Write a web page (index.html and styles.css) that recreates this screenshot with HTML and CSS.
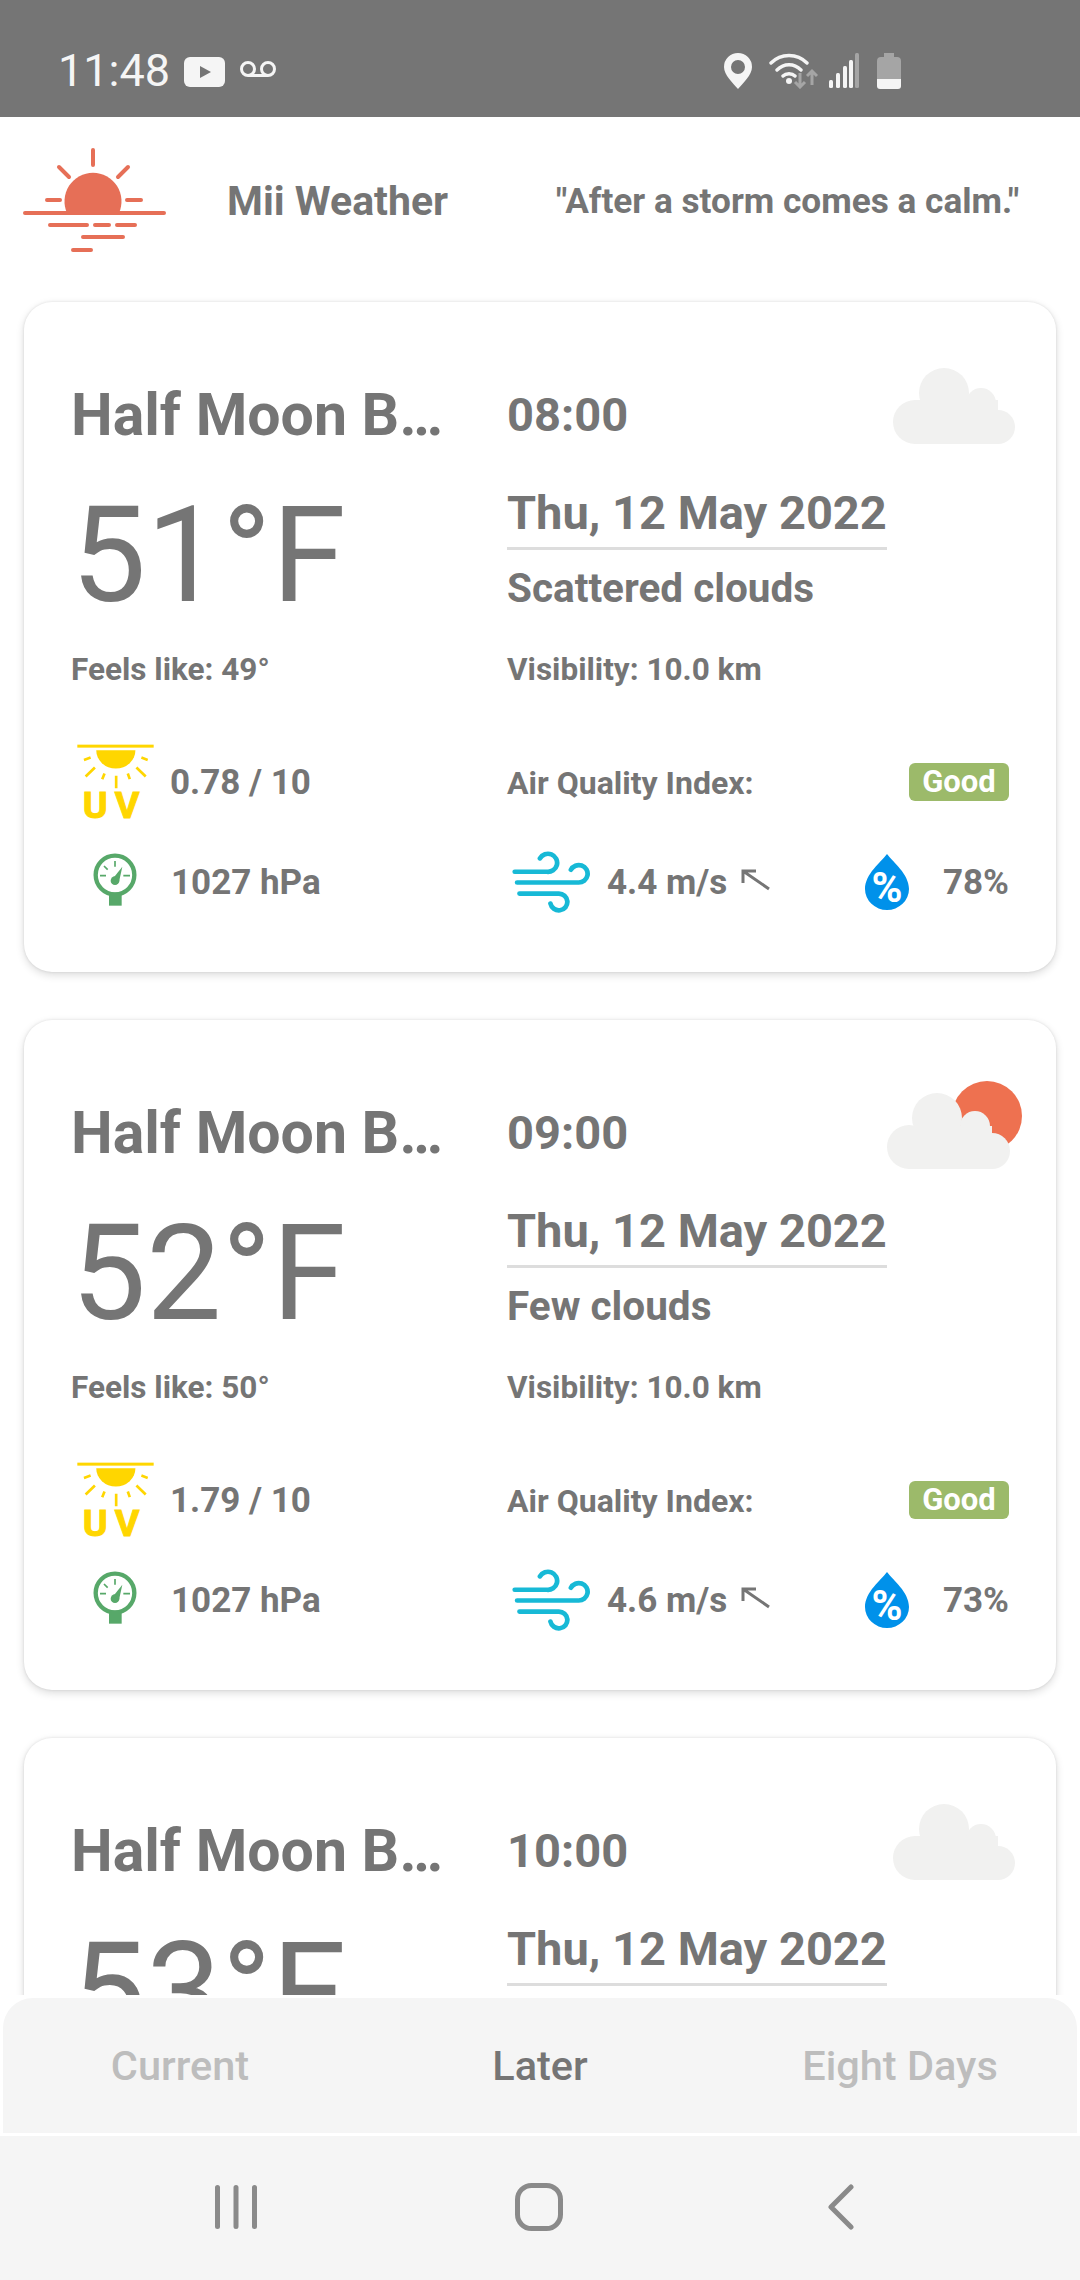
FILE: index.html
```html
<!DOCTYPE html>
<html lang="en">
<head>
<meta charset="utf-8">
<title>Mii Weather</title>
<link rel="stylesheet" href="styles.css">
</head>
<body>
<svg class="sprites" aria-hidden="true">
  <symbol id="cloud-a" viewBox="885 360 140 95">
    <g fill="#f1f1f0">
      <circle cx="915" cy="422" r="22"/><circle cx="944" cy="393" r="25"/><circle cx="981" cy="403" r="15"/><circle cx="998" cy="427" r="17"/>
      <rect x="915" y="400" width="83" height="44"/>
    </g>
  </symbol>
  <symbol id="cloud-b" viewBox="885 1077 140 95">
    <circle cx="987" cy="1115" r="35" fill="#ee7150"/>
    <g fill="#f1f1f0">
      <circle cx="909" cy="1146" r="22"/><circle cx="937" cy="1117" r="25"/><circle cx="975" cy="1125" r="15"/><circle cx="992" cy="1150" r="18"/>
      <rect x="909" y="1125" width="83" height="43"/>
    </g>
  </symbol>
  <symbol id="sunray" viewBox="100 90 250 250">
    <rect x="110" y="101" width="230" height="9" fill="#ffd600"/>
    <path d="M167 118h118a59 55 0 0 1-118 0z" fill="#ffd600"/>
    <g stroke="#ffd600" stroke-width="8" fill="none">
      <path d="M130 147l20-7M303 140l19 7M135 197l28-27M288 170l28 27M185 205l7-17M262 188l6 17M227 195v37"/>
    </g>
  </symbol>
  <symbol id="gauge" viewBox="150 420 150 180">
    <circle cx="225" cy="495" r="58" fill="none" stroke="#57a869" stroke-width="13"/>
    <rect x="207" y="548" width="38" height="39" fill="#57a869"/>
    <path d="M225 453v17M192 468l11 11M180 497h18M250 497h20" stroke="#57a869" stroke-width="5" fill="none"/>
    <circle cx="225" cy="512" r="13" fill="#57a869"/>
    <path d="M217 508l30-38-10 46z" fill="#57a869"/>
  </symbol>
  <symbol id="wind" viewBox="60 330 235 185" preserveAspectRatio="none">
    <path d="M71 392H165a27 27 0 1 0-20-40M78 424H258a26 26 0 1 0-22-38M85 457H200a25 25 0 1 1-24 30" fill="none" stroke="#17b9d6" stroke-width="14" stroke-linecap="round"/>
  </symbol>
  <symbol id="arrow" viewBox="0 0 30 22" preserveAspectRatio="none">
    <path d="M28 20L2 2M2 14V2H15" fill="none" stroke="#757575" stroke-width="3"/>
  </symbol>
  <symbol id="drop-shape" viewBox="0 0 44 56">
    <path d="M22 0C28 8 44 20 44 35A22 21 0 0 1 0 35C0 20 16 8 22 0z" fill="#0091ea"/>
  </symbol>
</svg>

<header class="status-bar">
  <div class="status-left">
    <span class="clock">11:48</span>
    <svg class="ic-yt" width="41" height="30" viewBox="0 0 41 30"><rect width="41" height="30" rx="6" fill="#f5f5f5"/><path d="M16 9l11 6-11 6z" fill="#757575"/></svg>
    <svg class="ic-vm" width="38" height="18" viewBox="0 0 38 18"><circle cx="9" cy="8" r="6.500" fill="none" stroke="#f5f5f5" stroke-width="3"/><circle cx="29" cy="8" r="6.500" fill="none" stroke="#f5f5f5" stroke-width="3"/><path d="M9 14.500h20" stroke="#f5f5f5" stroke-width="3"/></svg>
  </div>
  <div class="status-right">
    <svg width="28" height="36" viewBox="0 0 28 36"><path fill-rule="evenodd" d="M14 0a14 14 0 0 1 14 14c0 8-9 16-14 22C9 30 0 22 0 14A14 14 0 0 1 14 0zm0 7a7 7 0 1 0 0 14 7 7 0 0 0 0-14z" fill="#f5f5f5"/></svg>
    <svg class="ic-wifi" width="50" height="36" viewBox="0 0 50 36"><g fill="none" stroke="#f5f5f5" stroke-width="3.400" stroke-linecap="round"><path d="M2 10C12 0 28 0 38 10M8 17C15 10 25 10 32 17M14 23C17 20 23 20 26 23"/></g><circle cx="20" cy="28" r="3" fill="#f5f5f5"/><path d="M31 20v14M26 29l5 5 5-5M43 32V18M38 23l5-5 5 5" fill="none" stroke="#a5a5a5" stroke-width="3"/></svg>
    <svg class="ic-signal" width="30" height="35" viewBox="0 0 30 35"><g fill="#f5f5f5"><rect x="0" y="27" width="4" height="8" rx="1.500"/><rect x="7" y="20" width="4" height="15" rx="1.500"/><rect x="14" y="13" width="4" height="22" rx="1.500"/><rect x="20" y="7" width="4" height="28" rx="1.500"/></g><rect x="26" y="0" width="4" height="35" rx="1.500" fill="#a5a5a5"/></svg>
    <svg class="ic-battery" width="24" height="36" viewBox="0 0 24 36"><path d="M7 0h10v4h3a4 4 0 0 1 4 4v18H0V8a4 4 0 0 1 4-4h3z" fill="#a5a5a5"/><path d="M0 26h24v7a3 3 0 0 1-3 3H3a3 3 0 0 1-3-3z" fill="#f5f5f5"/></svg>
  </div>
</header>

<section class="app-bar">
  <svg class="logo" width="170" height="130" viewBox="10 130 170 130">
    <path d="M67 212A28.500 28.500 0 1 1 119 212z" fill="#e66f57"/>
    <g fill="none" stroke="#e66f57" stroke-linecap="round" stroke-width="4">
      <path d="M93 149v15M59 166l10 10M128 166l-10 10M47 199h13M127 199h14M25 212h139M50 224h37M95 224h14M117 224h18M83 236h40M73 249h18"/>
    </g>
  </svg>
  <h1 class="app-title">Mii Weather</h1>
  <p class="quote">"After a storm comes a calm."</p>
</section>

<main class="feed">
  <article class="card">
    <div class="name">Half Moon B…</div>
    <div class="time-row"><span class="time">08:00</span><svg class="sky"><use href="#cloud-a"/></svg></div>
    <div class="temp">51°F</div>
    <div class="date-block"><div class="date">Thu, 12 May 2022</div><div class="desc">Scattered clouds</div></div>
    <div class="small">Feels like: 49°</div>
    <div class="small">Visibility: 10.0 km</div>
    <div class="row-a stat">
      <svg class="ic-uv" viewBox="100 90 250 250"><use href="#sunray" x="100" y="90" width="250" height="250"/><text x="126 223" y="321" class="uv-text">UV</text></svg>
      <span>0.78 / 10</span>
    </div>
    <div class="row-a aqi"><span class="small">Air Quality Index:</span><span class="badge">Good</span></div>
    <div class="row-b stat"><svg class="ic-gauge"><use href="#gauge"/></svg><span>1027 hPa</span></div>
    <div class="row-b wind-row">
      <svg class="ic-wind"><use href="#wind"/></svg><span class="wind-val">4.4 m/s</span><svg class="ic-arrow"><use href="#arrow"/></svg>
      <svg class="ic-drop" viewBox="0 0 44 56"><use href="#drop-shape" width="44" height="56"/><text x="22" y="48" class="drop-text" text-anchor="middle">%</text></svg>
      <span class="humid">78%</span>
    </div>
  </article>

  <article class="card">
    <div class="name">Half Moon B…</div>
    <div class="time-row"><span class="time">09:00</span><svg class="sky"><use href="#cloud-b"/></svg></div>
    <div class="temp">52°F</div>
    <div class="date-block"><div class="date">Thu, 12 May 2022</div><div class="desc">Few clouds</div></div>
    <div class="small">Feels like: 50°</div>
    <div class="small">Visibility: 10.0 km</div>
    <div class="row-a stat">
      <svg class="ic-uv" viewBox="100 90 250 250"><use href="#sunray" x="100" y="90" width="250" height="250"/><text x="126 223" y="321" class="uv-text">UV</text></svg>
      <span>1.79 / 10</span>
    </div>
    <div class="row-a aqi"><span class="small">Air Quality Index:</span><span class="badge">Good</span></div>
    <div class="row-b stat"><svg class="ic-gauge"><use href="#gauge"/></svg><span>1027 hPa</span></div>
    <div class="row-b wind-row">
      <svg class="ic-wind"><use href="#wind"/></svg><span class="wind-val">4.6 m/s</span><svg class="ic-arrow"><use href="#arrow"/></svg>
      <svg class="ic-drop" viewBox="0 0 44 56"><use href="#drop-shape" width="44" height="56"/><text x="22" y="48" class="drop-text" text-anchor="middle">%</text></svg>
      <span class="humid">73%</span>
    </div>
  </article>

  <article class="card">
    <div class="name">Half Moon B…</div>
    <div class="time-row"><span class="time">10:00</span><svg class="sky"><use href="#cloud-a"/></svg></div>
    <div class="temp">53°F</div>
    <div class="date-block"><div class="date">Thu, 12 May 2022</div></div>
  </article>
</main>

<nav class="tabs">
  <span class="tab">Current</span>
  <span class="tab tab-active">Later</span>
  <span class="tab">Eight Days</span>
</nav>

<footer class="sys-nav">
  <svg width="42" height="44" viewBox="0 0 42 44"><path d="M2.500 2.500v39M21 2.500v39M39.500 2.500v39" stroke="#8a8a8a" stroke-width="5" stroke-linecap="round" fill="none"/></svg>
  <svg class="nav-home" width="48" height="48" viewBox="0 0 48 48"><rect x="2.500" y="2.500" width="43" height="43" rx="14" fill="none" stroke="#8a8a8a" stroke-width="5"/></svg>
  <svg width="26" height="46" viewBox="0 0 26 46"><path d="M23 3L3 23l20 20" fill="none" stroke="#8a8a8a" stroke-width="5" stroke-linecap="round" stroke-linejoin="round"/></svg>
</footer>
</body>
</html>
```
FILE: styles.css
```css
* { box-sizing: border-box; }
html, body { margin: 0; padding: 0; }
body {
  width: 1080px;
  height: 2280px;
  display: flex;
  flex-direction: column;
  overflow: hidden;
  background: #fff;
  color: #757575;
  font-family: Roboto, "Noto Sans", sans-serif;
}
.sprites { position: absolute; width: 0; height: 0; }
.uv-text { font-family: Roboto, sans-serif; font-weight: 700; font-size: 114px; fill: #ffd600; stroke: #ffd600; stroke-width: 3px; }
.drop-text { font-family: Roboto, sans-serif; font-weight: 700; font-size: 42px; fill: #fff; }

.status-bar {
  height: 117px;
  flex: none;
  background: #757575;
  display: flex;
  align-items: center;
  justify-content: space-between;
  padding: 24px 179px 0 58px;
}
.status-left, .status-right { display: flex; align-items: center; }
.clock { font-size: 45px; color: #f5f5f5; line-height: 48px; margin-right: 14px; }
.ic-yt { margin-top: 2px; }
.ic-vm { margin-left: 14px; margin-top: -1px; }
.ic-wifi { margin-left: 17px; margin-right: 10px; }
.ic-signal { margin-right: 18px; }

.app-bar {
  height: 179px;
  flex: none;
  display: flex;
  align-items: center;
  padding-left: 10px;
}
.logo { flex: none; margin-top: -22px; }
.app-title { margin: -11px 0 0 47px; font-size: 41px; font-weight: 700; width: 329px; line-height: 48px; }
.quote { margin: -11px 0 0; font-size: 35.200px; font-weight: 700; white-space: nowrap; line-height: 40px; }

.feed {
  flex: none;
  height: 1699px;
  overflow: hidden;
  padding: 6px 24px 0;
  display: flex;
  flex-direction: column;
  gap: 48px;
}
.card {
  flex: none;
  height: 670px;
  background: #fff;
  border-radius: 28px;
  box-shadow: 0 3px 8px rgba(0,0,0,.14), 0 0 3px rgba(0,0,0,.1);
  padding: 72px 47px 0 47px;
  display: grid;
  grid-template-columns: 436px 502px;
  grid-template-rows: 82px 173px 78px 111px 100px;
}
.name { font-size: 59px; font-weight: 700; line-height: 82px; white-space: nowrap; }
.time-row { display: flex; justify-content: space-between; align-items: flex-start; }
.time { font-size: 47px; font-weight: 700; line-height: 82px; }
.sky { width: 140px; height: 95px; margin: -14px -16px 0 0; flex: none; }
.temp { font-size: 134px; line-height: 146px; margin: 27px 0 0; }
.date-block { padding-top: 28px; }
.date { width: fit-content; font-size: 47px; font-weight: 700; line-height: 58px; padding-bottom: 5px; border-bottom: 3px solid #ddd; }
.desc { font-size: 40.500px; font-weight: 700; line-height: 58px; margin-top: 9px; }
.small { font-size: 31.500px; font-weight: 700; line-height: 78px; padding-top: 2px; }

.row-a, .row-b { display: flex; align-items: center; height: 72px; }
.row-a { margin-top: 39px; }
.row-b { margin-top: 28px; }
.stat { font-size: 35px; font-weight: 700; }
.ic-uv { width: 83px; height: 83px; margin: 0 13px 0 3px; flex: none; }
.ic-gauge { width: 50px; height: 60px; margin: -4px 31px 0 19px; flex: none; }
.aqi { justify-content: space-between; }
.aqi .small { line-height: 40px; font-size: 32px; }
.badge { background: #9cba6a; color: #fff; font-size: 31px; font-weight: 700; line-height: 38px; width: 100px; text-align: center; border-radius: 6px; }
.wind-row { font-size: 35px; font-weight: 700; }
.ic-wind { width: 80px; height: 62px; margin: 0 16px 0 4px; flex: none; }
.ic-arrow { width: 30px; height: 22px; margin: -4px 0 0 14px; flex: none; }
.ic-drop { width: 44px; height: 56px; margin-left: 94px; flex: none; }
.humid { margin-left: auto; }

.tabs {
  flex: none;
  height: 135px;
  margin: 3px 3px 3px;
  background: #f5f5f5;
  border-radius: 30px 30px 0 0;
  display: grid;
  grid-template-columns: 354px 1fr 354px;
  align-items: center;
  justify-items: center;
  font-size: 41.500px;
  font-weight: 500;
  color: #bdbdbd;
}
.tab-active { color: #757575; }

.sys-nav {
  flex: none;
  height: 144px;
  background: #f5f5f5;
  display: flex;
  align-items: center;
  padding: 0 0 3px 215px;
}
.nav-home { margin: 0 265px 0 258px; }
```
